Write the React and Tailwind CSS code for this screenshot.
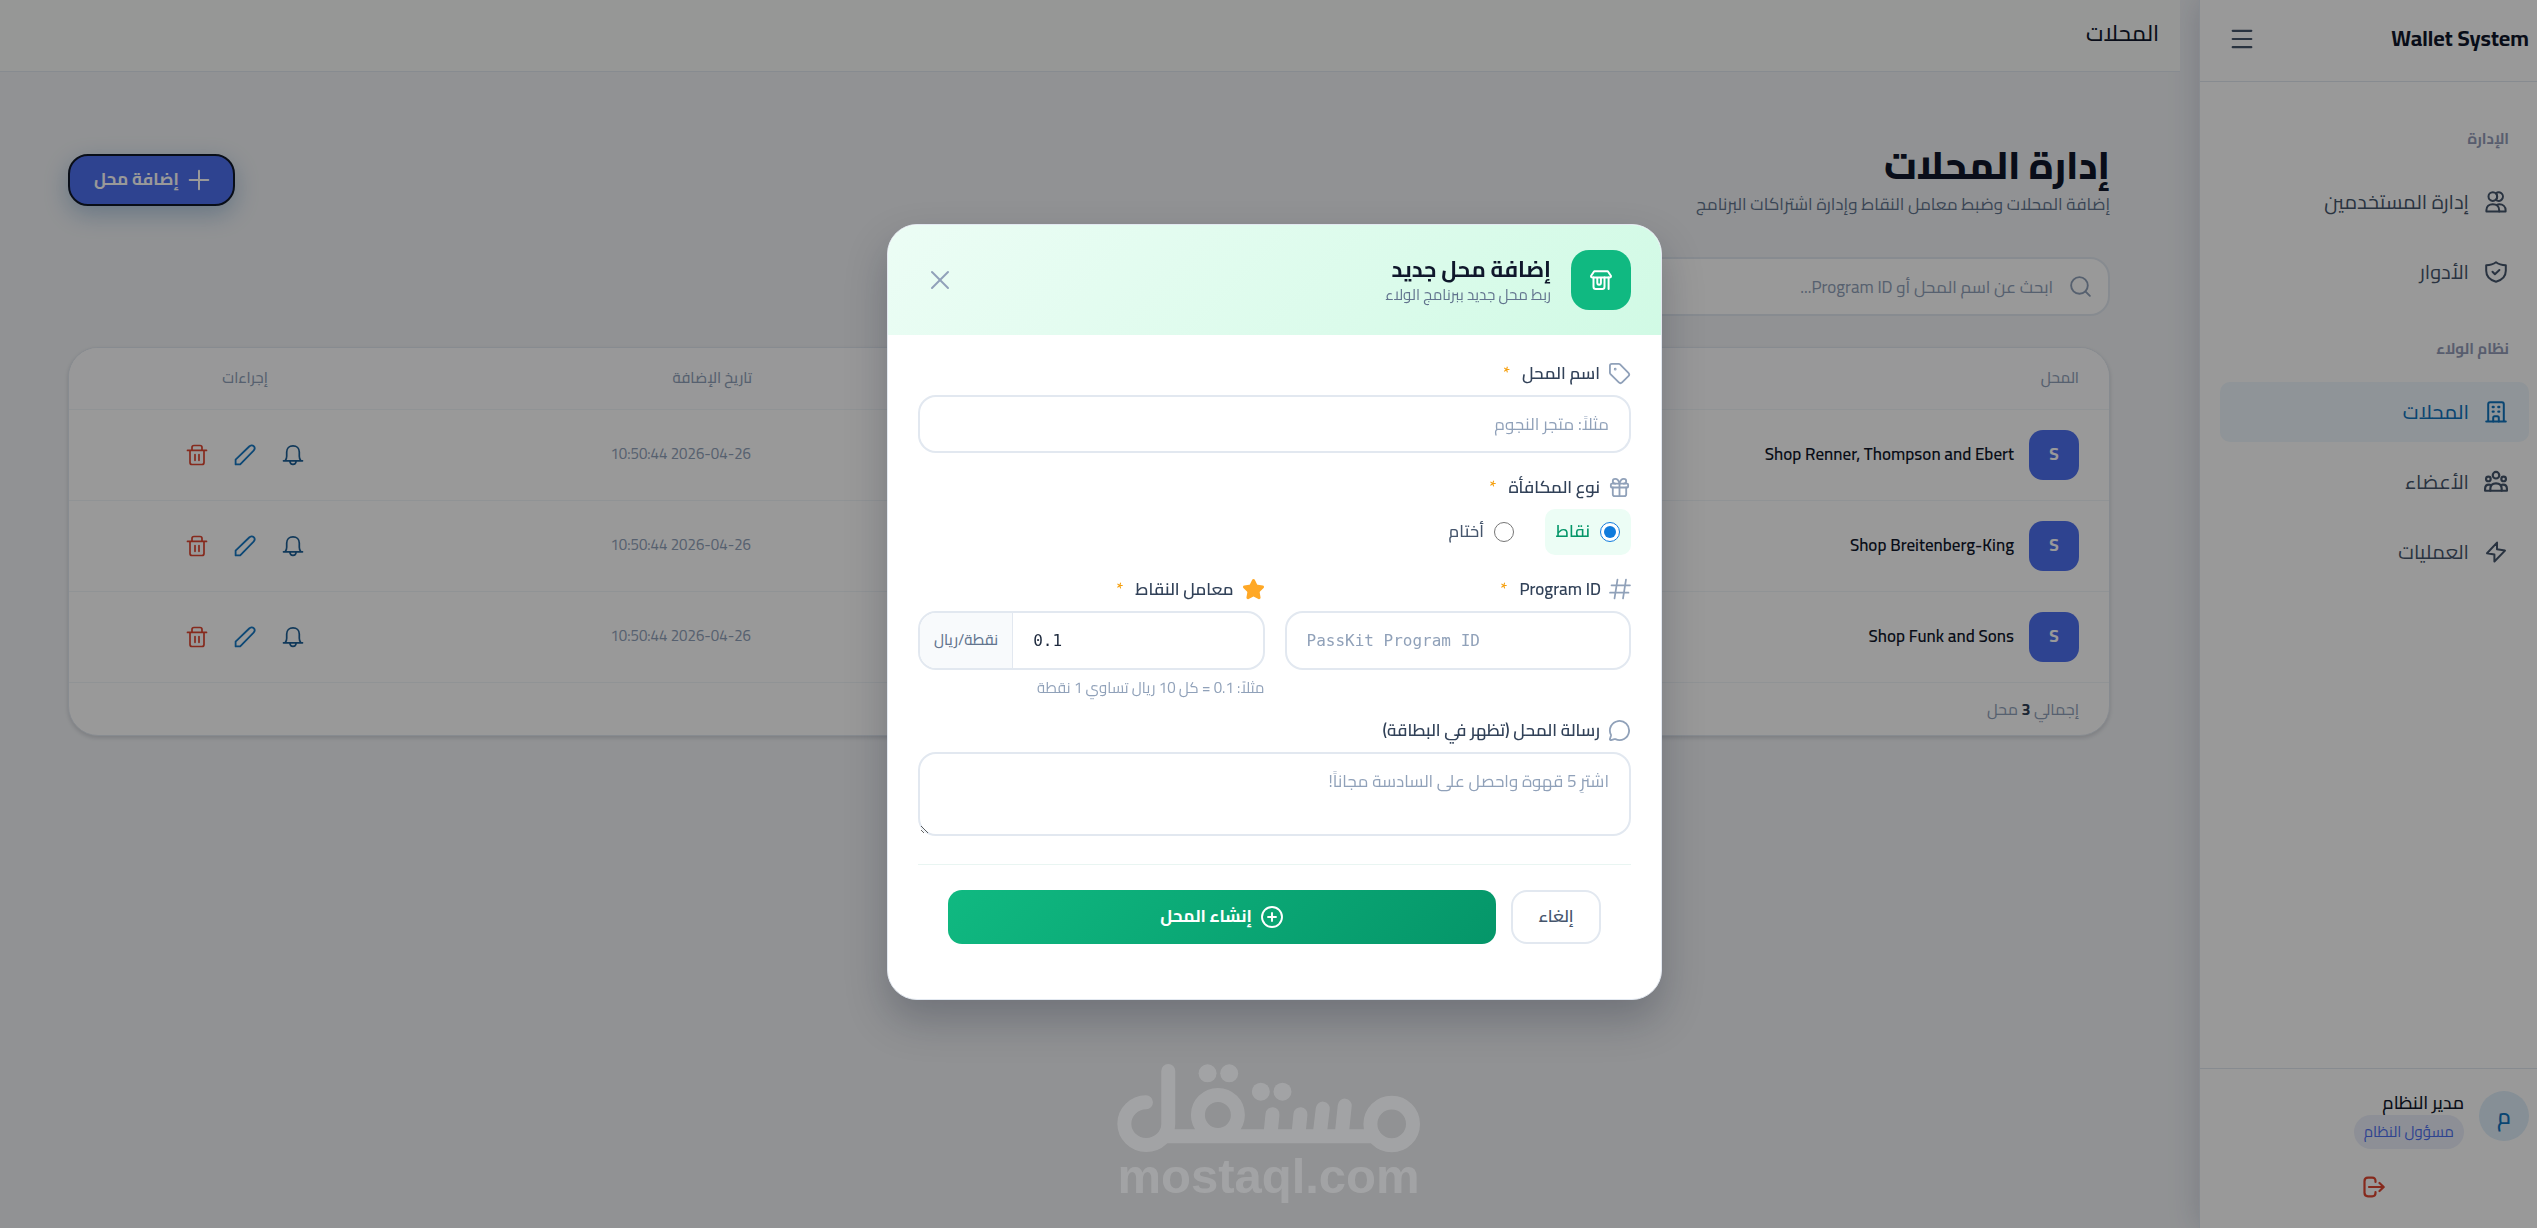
import React, { useState } from 'react';
import { Menu, Search, Plus, X, Tag, Gift, Star, MessageCircle, CirclePlus } from 'lucide-react';

const shops = [
  { id: 1, name: 'Shop Renner, Thompson and Ebert', date: '2026-04-26 10:50:44' },
  { id: 2, name: 'Shop Breitenberg-King', date: '2026-04-26 10:50:44' },
  { id: 3, name: 'Shop Funk and Sons', date: '2026-04-26 10:50:44' },
];

const Icon = ({ className, children, strokeWidth = 2 }) => (
  <svg
    viewBox="0 0 22 22"
    className={className}
    fill="none"
    stroke="currentColor"
    strokeWidth={strokeWidth}
    strokeLinecap="round"
    strokeLinejoin="round"
    aria-hidden="true"
  >
    {children}
  </svg>
);

const UsersIcon = () => (
  <Icon className="size-[22px] shrink-0">
    <circle cx="7.8" cy="5.6" r="4.3" />
    <path d="M11 2.2a4.3 4.3 0 1 1 0 6.8c1.4-2 1.4-4.8 0-6.8z" />
    <path d="M1.4 20.6v-1.4c0-3.6 2.6-6 6.4-6s6.4 2.4 6.4 6v1.4z" />
    <path d="M11.8 13.8c.8-.4 1.7-.6 2.6-.6 3.6 0 6.2 2.4 6.2 6v1.4h-6.4" />
  </Icon>
);

const ShieldIcon = () => (
  <Icon className="size-[22px] shrink-0">
    <path d="M11 1.3C8.5 3.3 5 4.2 1.2 4.2v5.6c0 5.6 4.2 9.4 9.8 11 5.6-1.6 9.8-5.4 9.8-11V4.2C17 4.2 13.5 3.3 11 1.3z" />
    <path d="M7.5 10.8l2.4 2.4 4.5-4.2" />
  </Icon>
);

const BuildingIcon = () => (
  <Icon className="size-[22px] shrink-0">
    <path d="M1.2 20.6h19.6M3.2 20.6V3.2c0-1.1.8-1.9 1.9-1.9h11.8c1.1 0 1.9.8 1.9 1.9v17.4" />
    <path d="M8.2 20.6v-3.8c0-.9.6-1.5 1.5-1.5h2.6c.9 0 1.5.6 1.5 1.5v3.8" />
    <path d="M7.8 6h.8M13.4 6h.8M7.8 10.6h.8M13.4 10.6h.8" strokeWidth="2.4" />
  </Icon>
);

const GroupIcon = () => (
  <Icon className="size-6 shrink-0">
    <circle cx="11" cy="4.8" r="3" />
    <circle cx="4" cy="8.2" r="2.1" />
    <circle cx="18" cy="8.2" r="2.1" />
    <path d="M5.8 19v-1.8c0-3 2-5 5.2-5s5.2 2 5.2 5V19z" />
    <path d="M5.8 19H1v-1.7c0-2.4 1.3-3.9 3.6-3.9.7 0 1.3.2 1.8.5M16.2 19H21v-1.7c0-2.4-1.3-3.9-3.6-3.9-.7 0-1.3.2-1.8.5" />
  </Icon>
);

const BoltIcon = () => (
  <Icon className="size-[22px] shrink-0">
    <path d="M12 1.6L2 12.2l7.4 1.4v6.9L20 9.6l-8-1.3z" />
  </Icon>
);

const TrashIcon = () => (
  <Icon className="size-[22px]" strokeWidth={1.7}>
    <path d="M1.5 6.4h19M4 6.4v12.1c0 1.1.9 2 2 2h10c1.1 0 2-.9 2-2V6.4M6 6.2V3.5c0-1.2.8-2 2-2h6c1.2 0 2 .8 2 2v2.7M9 10.5v5.8M13 10.5v5.8" />
  </Icon>
);

const PencilIcon = () => (
  <Icon className="size-[22px]" strokeWidth={1.8}>
    <path d="M1.6 15.6v4.8h4.6L19.6 6.6c1.3-1.4 1.2-3.3.1-4.4-1.2-1.2-3.2-1-4.5.3z" />
  </Icon>
);

const BellIcon = () => (
  <Icon className="size-[22px]" strokeWidth={1.7}>
    <path d="M1.5 16.8h19M3.2 16.6c1.3-1.3 1.5-2.6 1.5-4.3V8c0-3.7 2.5-6.2 6.3-6.2s6.3 2.5 6.3 6.2v4.3c0 1.7.2 3 1.5 4.3M7.8 17c.2 2 1.4 3.4 3.2 3.4s3-1.4 3.2-3.4" />
  </Icon>
);

const LogoutIcon = () => (
  <Icon className="size-[22px]" strokeWidth={2.2}>
    <path d="M12.5 6V5c0-2.2-1.1-3.3-3.3-3.3H5C2.8 1.7 1.5 2.9 1.5 5.2v11.6c0 2.3 1.3 3.5 3.5 3.5h4.2c2.2 0 3.3-1.1 3.3-3.3v-1M6 11h14.5M16.5 7l4.2 4-4.2 4" />
  </Icon>
);

const StoreIcon = () => (
  <Icon className="size-[22px]">
    <path d="M4.2 2.2h13.6L21 7c0 1-.8 1.5-1.7 1.5H2.7C1.8 8.5 1 8 1 7z" />
    <path d="M3.5 8.5v9.3c0 1.5.8 2.3 2.3 2.3h6.4c1.5 0 2.3-.8 2.3-2.3V8.5M18.6 8.5v11.6" />
    <path d="M7.3 9v4.7c0 1.3.6 2 1.8 2s1.8-.7 1.8-2V9" />
  </Icon>
);

const HashIcon = () => (
  <Icon className="size-[22px] text-slate-400" strokeWidth={1.7}>
    <path d="M8.5 1.5l-3 19M17 1.5l-3 19M2.5 7.3H21M1 14.7h18.5" />
  </Icon>
);

const navGroups = [
  {
    label: 'الإدارة',
    items: [
      { label: 'إدارة المستخدمين', icon: UsersIcon },
      { label: 'الأدوار', icon: ShieldIcon },
    ],
  },
  {
    label: 'نظام الولاء',
    items: [
      { label: 'المحلات', icon: BuildingIcon, active: true },
      { label: 'الأعضاء', icon: GroupIcon },
      { label: 'العمليات', icon: BoltIcon },
    ],
  },
];

const Sidebar = () => (
  <aside className="flex w-[338px] shrink-0 flex-col border-l border-slate-200 bg-white shadow-[0_0_30px_rgba(30,41,90,0.18)]">
    <div className="flex h-[82px] items-center justify-between border-b border-slate-200 pr-2 pb-1 pl-7">
      <span dir="ltr" className="text-[22px] font-bold text-slate-900">Wallet System</span>
      <button type="button" aria-label="القائمة" className="text-slate-600">
        <Menu className="size-7" strokeWidth={1.8} />
      </button>
    </div>
    <nav className="flex flex-1 flex-col gap-[21px] pt-[41px] pr-2 pl-5">
      {navGroups.map((group) => (
        <div key={group.label}>
          <h3 className="mb-[17px] pr-5 text-[15px] leading-8 font-bold text-[#939bb8]">{group.label}</h3>
          <ul>
            {group.items.map(({ label, icon: NavIcon, active }) => (
              <li key={label} className="mb-[10px]">
                <a
                  href="#"
                  className={
                    active
                      ? 'flex h-[60px] items-center gap-4 rounded-[10px] bg-[#eef7fd] pr-[22px] text-[20px] font-medium text-[#0f74be]'
                      : 'flex h-[60px] items-center gap-4 rounded-[10px] pr-[22px] text-[20px] text-slate-600'
                  }
                >
                  <span className="flex w-[22px] justify-center">
                    <NavIcon />
                  </span>
                  {label}
                </a>
              </li>
            ))}
          </ul>
        </div>
      ))}
    </nav>
    <div className="border-t border-slate-200 pt-[22px] pr-2 pb-[30px]">
      <div className="flex items-start gap-[15px]">
        <div className="flex size-[50px] items-center justify-center rounded-full bg-[#dfeffb] text-[22px] font-semibold text-[#0f74be]">
          م
        </div>
        <div className="flex flex-col items-start">
          <span className="text-[18px] leading-6 font-medium text-slate-900">مدير النظام</span>
          <span className="rounded-full bg-[#ebeffa] px-[10px] text-[15px] leading-[34px] text-[#4e70f0]">مسؤول النظام</span>
        </div>
      </div>
      <button type="button" aria-label="تسجيل الخروج" className="mt-[27px] mr-[144px] block text-[#df4631]">
        <LogoutIcon />
      </button>
    </div>
  </aside>
);

const ShopsTable = () => (
  <section className="overflow-hidden rounded-[30px] border border-slate-200 bg-white shadow-[0_2px_4px_rgba(15,23,42,0.15)]">
    <table className="w-full table-fixed text-right">
      <thead>
        <tr className="h-[61px] border-b border-slate-100 bg-[#fdfeff] text-[15px] text-slate-400">
          <th className="pr-[30px] font-medium">المحل</th>
          <th className="w-[361px] pr-[30px] font-medium">تاريخ الإضافة</th>
          <th className="w-[352px] text-center font-medium">إجراءات</th>
        </tr>
      </thead>
      <tbody>
        {shops.map((shop) => (
          <tr key={shop.id} className="h-[91px] border-b border-slate-100">
            <td className="pr-[30px]">
              <div className="flex items-center gap-[15px]">
                <span className="flex size-[50px] items-center justify-center rounded-[14px] bg-[#4e70f0] text-[17px] font-bold text-white">
                  S
                </span>
                <span className="text-[17px] font-semibold text-slate-900">{shop.name}</span>
              </div>
            </td>
            <td className="pr-[31px] text-[15px] text-slate-400">{shop.date}</td>
            <td>
              <div className="flex items-center justify-center gap-[26px]">
                <button type="button" aria-label="إشعار" className="text-[#1d5f96]">
                  <BellIcon />
                </button>
                <button type="button" aria-label="تعديل" className="text-[#1678c4]">
                  <PencilIcon />
                </button>
                <button type="button" aria-label="حذف" className="text-[#df4631]">
                  <TrashIcon />
                </button>
              </div>
            </td>
          </tr>
        ))}
      </tbody>
    </table>
    <p className="pr-[30px] text-[16px] leading-[52px] text-slate-400">
      إجمالي <strong className="font-bold text-slate-700">3</strong> محل
    </p>
  </section>
);

const Watermark = () => (
  <div dir="ltr" className="pointer-events-none fixed inset-x-0 bottom-[29px] flex flex-col items-center text-white opacity-[0.16]">
    <svg viewBox="108 100 910 268" className="w-[303px]" fill="none" stroke="currentColor" strokeWidth="42" strokeLinecap="round" aria-hidden="true">
      <path d="M262 121V280A66 64 0 1 1 195 215" />
      <path d="M255 317H880" />
      <circle cx="411" cy="253" r="60" />
      <circle cx="933" cy="280" r="64" />
      <path d="M575 251l-6 60M659 251l-6 60M726 234l-9 76M792 225l-9 86" />
      <g fill="currentColor" stroke="none">
        <circle cx="380" cy="128" r="27" />
        <circle cx="445" cy="128" r="27" />
        <circle cx="540" cy="183" r="27" />
        <circle cx="605" cy="183" r="27" />
      </g>
    </svg>
    <span className="font-['Liberation_Sans',sans-serif] text-[49px] leading-[46px] font-bold">mostaql.com</span>
  </div>
);

const FieldLabel = ({ htmlFor, icon, required, children }) => (
  <label htmlFor={htmlFor} className="mb-2 flex items-center gap-2 text-[17px] leading-7 font-semibold text-slate-700">
    {icon}
    {children}
    {required && <span className="mr-1 text-[#f59e0b]">*</span>}
  </label>
);

const AddShopModal = () => {
  const [name, setName] = useState('');
  const [type, setType] = useState('points');
  const [programId, setProgramId] = useState('');
  const [rate, setRate] = useState('0.1');
  const [message, setMessage] = useState('');

  return (
    <div className="fixed inset-0 flex items-center justify-center bg-black/40 pb-1 pl-3">
      <Watermark />
      <div
        role="dialog"
        aria-labelledby="modal-title"
        className="relative w-full max-w-[775px] overflow-hidden rounded-[30px] border border-slate-200 bg-white shadow-[0_20px_40px_rgba(15,23,42,0.25)]"
      >
        <div className="flex items-center gap-5 bg-[linear-gradient(135deg,#ecfdf5,#d1fae5)] py-[25px] pr-[30px] pl-9">
          <div className="flex size-[60px] items-center justify-center rounded-[18px] bg-[#10b981] text-white">
            <StoreIcon />
          </div>
          <div className="flex-1">
            <h2 id="modal-title" className="text-[22px] leading-[30px] font-bold text-slate-900">إضافة محل جديد</h2>
            <p className="text-[15px] leading-[22px] text-slate-500">ربط محل جديد ببرنامج الولاء</p>
          </div>
          <button type="button" aria-label="إغلاق" className="text-slate-400">
            <X className="size-8" strokeWidth={1.5} />
          </button>
        </div>

        <form className="flex flex-col gap-5 px-[30px] pt-6 pb-[25px]" onSubmit={(e) => e.preventDefault()}>
          <div>
            <FieldLabel htmlFor="shop-name" required icon={<Tag className="size-[23px] text-slate-400" strokeWidth={1.9} />}>
              اسم المحل
            </FieldLabel>
            <input
              id="shop-name"
              type="text"
              value={name}
              onChange={(e) => setName(e.target.value)}
              placeholder="مثلاً: متجر النجوم"
              className="block h-[58px] w-full rounded-[18px] border-2 border-slate-200 px-5 text-[17px] placeholder:text-slate-400"
            />
          </div>

          <fieldset>
            <legend className="mb-2 flex items-center gap-2 text-[17px] leading-7 font-semibold text-slate-700">
              <Gift className="size-[23px] text-slate-400" strokeWidth={1.9} />
              نوع المكافأة
              <span className="mr-1 text-[#f59e0b]">*</span>
            </legend>
            <div className="flex gap-5">
              <label
                className={
                  type === 'points'
                    ? 'flex h-[46px] items-center gap-[10px] rounded-[10px] bg-[#ecfdf5] px-[11px] text-[17px] font-semibold text-[#059669]'
                    : 'flex h-[46px] items-center gap-[10px] rounded-[10px] px-[11px] text-[17px] font-medium text-slate-600'
                }
              >
                <input
                  type="radio"
                  name="reward"
                  checked={type === 'points'}
                  onChange={() => setType('points')}
                  className="size-5 accent-[#0f7bdc]"
                />
                نقاط
              </label>
              <label
                className={
                  type === 'stamps'
                    ? 'flex h-[46px] items-center gap-[10px] rounded-[10px] bg-[#ecfdf5] px-[11px] text-[17px] font-semibold text-[#059669]'
                    : 'flex h-[46px] items-center gap-[10px] rounded-[10px] px-[11px] text-[17px] font-medium text-slate-600'
                }
              >
                <input
                  type="radio"
                  name="reward"
                  checked={type === 'stamps'}
                  onChange={() => setType('stamps')}
                  className="size-5 accent-[#0f7bdc]"
                />
                أختام
              </label>
            </div>
          </fieldset>

          <div className="grid grid-cols-2 gap-5">
            <div>
              <FieldLabel htmlFor="program-id" required icon={<HashIcon />}>
                Program ID
              </FieldLabel>
              <input
                id="program-id"
                type="text"
                dir="ltr"
                value={programId}
                onChange={(e) => setProgramId(e.target.value)}
                placeholder="PassKit Program ID"
                className="block h-[59px] w-full rounded-[18px] border-2 border-slate-200 px-5 font-['DejaVu_Sans_Mono',monospace] text-[16px] placeholder:text-slate-400"
              />
            </div>
            <div>
              <FieldLabel htmlFor="rate" required icon={<Star className="size-[23px] fill-[#ffa826] text-[#ffa826]" />}>
                معامل النقاط
              </FieldLabel>
              <div className="flex h-[59px] overflow-hidden rounded-[18px] border-2 border-slate-200">
                <input
                  id="rate"
                  type="text"
                  inputMode="decimal"
                  dir="ltr"
                  value={rate}
                  onChange={(e) => setRate(e.target.value)}
                  className="w-full min-w-0 px-5 font-['DejaVu_Sans_Mono',monospace] text-[16px] text-slate-800"
                />
                <span className="flex items-center border-r border-slate-200 bg-slate-50 px-[14px] text-[15px] font-medium whitespace-nowrap text-slate-500">
                  نقطة/ريال
                </span>
              </div>
              <p className="mt-[9px] text-[15px] leading-[17px] text-slate-400">مثلاً: 0.1 = كل 10 ريال تساوي 1 نقطة</p>
            </div>
          </div>

          <div>
            <FieldLabel htmlFor="message" icon={<MessageCircle className="size-[23px] text-slate-400" strokeWidth={1.9} />}>
              رسالة المحل (تظهر في البطاقة)
            </FieldLabel>
            <textarea
              id="message"
              value={message}
              onChange={(e) => setMessage(e.target.value)}
              placeholder="اشترِ 5 قهوة واحصل على السادسة مجاناً!"
              className="block h-[84px] w-full resize-y rounded-[18px] border-2 border-slate-200 px-5 py-[13px] text-[17px] leading-7 placeholder:text-slate-400"
            />
          </div>

          <div className="mt-2 flex gap-[15px] border-t border-[#e9f5f2] px-[30px] pt-[25px] pb-[30px]">
            <button type="button" className="h-[54px] w-[90px] rounded-[16px] border-2 border-slate-200 bg-white text-[17px] font-semibold text-slate-600">
              إلغاء
            </button>
            <button
              type="submit"
              className="flex h-[54px] flex-1 items-center justify-center gap-2 rounded-[14px] bg-[linear-gradient(135deg,#10b981,#059669)] text-[17px] font-bold text-white"
            >
              <CirclePlus className="size-6" strokeWidth={1.9} />
              إنشاء المحل
            </button>
          </div>
        </form>
      </div>
    </div>
  );
};

const App = () => (
  <div dir="rtl" className="flex min-h-screen bg-[#f2f4f7] font-['Cairo','Noto_Sans',sans-serif]">
    <Sidebar />
    <div className="mr-[19px] flex min-w-0 flex-1 flex-col">
      <header className="flex h-[72px] items-center border-b border-slate-200 bg-[#fafcfb] pr-[21px] pb-1">
        <h1 className="text-[22px] font-medium text-slate-900">المحلات</h1>
      </header>
      <main className="pt-[69px] pr-[70px] pl-[68px]">
        <div className="flex items-center justify-between">
          <div>
            <h2 className="text-[38px] leading-[48px] font-extrabold text-slate-900">إدارة المحلات</h2>
            <p className="text-[17px] leading-[30px] text-slate-500">إضافة المحلات وضبط معامل النقاط وإدارة اشتراكات البرنامج</p>
          </div>
          <button
            type="button"
            className="flex h-[52px] items-center gap-1 rounded-[20px] border-2 border-[#101828] bg-[#4e70f0] pr-[18px] pl-6 text-[17px] font-bold text-white shadow-[0_8px_25px_rgba(14,90,160,0.3)]"
          >
            <Plus className="size-8" strokeWidth={1.5} />
            إضافة محل
          </button>
        </div>
        <div className="mt-[38px] mb-[31px] flex h-[59px] max-w-[640px] items-center gap-[15px] rounded-[20px] border-2 border-slate-200 bg-white pr-[15px]">
          <Search className="size-[25px] text-slate-400" strokeWidth={1.8} />
          <input
            type="search"
            aria-label="بحث"
            placeholder="ابحث عن اسم المحل أو Program ID..."
            className="h-full flex-1 text-[17px] outline-none placeholder:text-slate-400"
          />
        </div>
        <ShopsTable />
      </main>
    </div>
    <AddShopModal />
  </div>
);

export default App;
